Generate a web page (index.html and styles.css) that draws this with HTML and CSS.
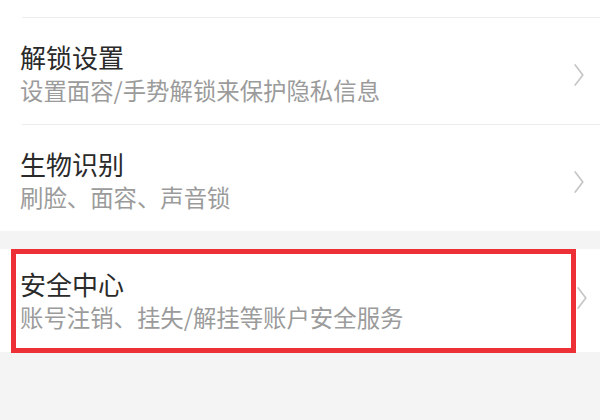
FILE: index.html
```html
<!DOCTYPE html>
<html lang="zh-CN">
<head>
<meta charset="utf-8">
<link rel="stylesheet" href="styles.css">
</head>
<body>
<div class="group">
  <div class="top-stub"></div>
  <div class="divider"></div>
  <div class="item item-a">
    <div class="texts">
      <div class="title">解锁设置</div>
      <div class="sub">设置面容/手势解锁来保护隐私信息</div>
    </div>
    <svg class="chev" width="10" height="22" viewBox="0 0 10 22"><path d="M1.2 1 L8.8 11 L1.2 21" fill="none" stroke="#c6c6c6" stroke-width="1.7" stroke-linecap="round" stroke-linejoin="round"/></svg>
  </div>
  <div class="divider"></div>
  <div class="item item-a">
    <div class="texts">
      <div class="title">生物识别</div>
      <div class="sub">刷脸、面容、声音锁</div>
    </div>
    <svg class="chev" width="10" height="22" viewBox="0 0 10 22"><path d="M1.2 1 L8.8 11 L1.2 21" fill="none" stroke="#c6c6c6" stroke-width="1.7" stroke-linecap="round" stroke-linejoin="round"/></svg>
  </div>
</div>
<div class="group group-2">
  <div class="item item-b marked">
    <div class="texts">
      <div class="title">安全中心</div>
      <div class="sub">账号注销、挂失/解挂等账户安全服务</div>
    </div>
    <svg class="chev chev-b" width="10" height="22" viewBox="0 0 10 22"><path d="M1.2 1 L8.8 11 L1.2 21" fill="none" stroke="#c6c6c6" stroke-width="1.7" stroke-linecap="round" stroke-linejoin="round"/></svg>
  </div>
</div>
</body>
</html>
```

FILE: styles.css
```css
html, body {
  margin: 0;
  padding: 0;
}
body {
  width: 600px;
  height: 420px;
  background: #f4f4f4;
  font-family: "Noto Sans CJK SC", "Noto Sans", sans-serif;
  overflow: hidden;
}
.group {
  background: #ffffff;
}
.group-2 {
  margin-top: 18px;
}
.top-stub {
  height: 17px;
}
.divider {
  height: 1px;
  margin-left: 22px;
  background: #ececec;
}
.item {
  display: flex;
  align-items: center;
  justify-content: space-between;
  padding-left: 20px;
  padding-right: 16px;
}
.item-a {
  padding-top: 22px;
  padding-bottom: 19px;
}
.item-b {
  padding-top: 18px;
  padding-bottom: 20px;
  padding-right: 13px;
}
.texts {
  display: flex;
  flex-direction: column;
  gap: 1px;
}
.title {
  font-size: 26px;
  line-height: 34px;
  color: #2a2a2a;
}
.sub {
  font-size: 23.4px;
  line-height: 30px;
  color: #9b9b9b;
}
.chev {
  flex: none;
  display: block;
}
.item-a .chev {
  margin-top: 4px;
}
.chev-b {
  margin-top: -4px;
}
.marked {
  position: relative;
}
.marked::after {
  content: "";
  position: absolute;
  left: 11px;
  top: 0;
  width: 565px;
  height: 104px;
  box-sizing: border-box;
  border: 5px solid #ec3036;
}
```
